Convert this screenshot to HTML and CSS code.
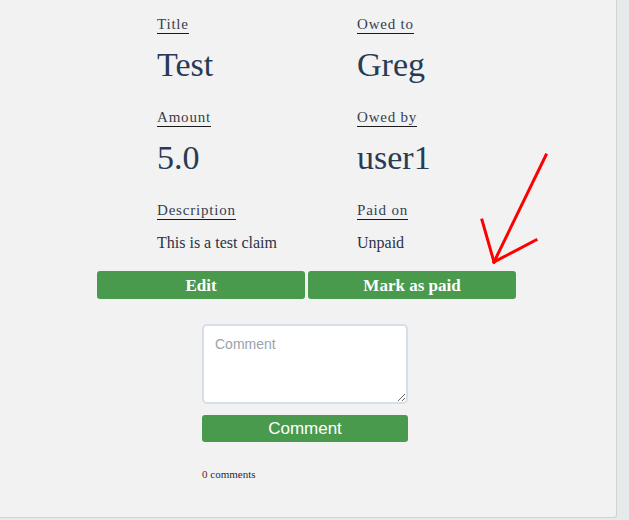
FILE: index.html
```html
<!DOCTYPE html>
<html>
<head>
<meta charset="utf-8">
<link rel="stylesheet" href="styles.css">
</head>
<body>
<div class="card">
  <div class="details">
    <div class="field"><span class="label">Title</span><div class="value">Test</div></div>
    <div class="field"><span class="label">Owed to</span><div class="value">Greg</div></div>
    <div class="field"><span class="label">Amount</span><div class="value">5.0</div></div>
    <div class="field"><span class="label">Owed by</span><div class="value">user1</div></div>
    <div class="field"><span class="label">Description</span><div class="text">This is a test claim</div></div>
    <div class="field"><span class="label">Paid on</span><div class="text">Unpaid</div></div>
  </div>
  <div class="actions">
    <button class="btn">Edit</button>
    <button class="btn">Mark as paid</button>
  </div>
  <div class="comments">
    <textarea class="comment-box" placeholder="Comment"></textarea>
    <button class="comment-btn">Comment</button>
    <div class="count"><span class="num">0</span> comments</div>
  </div>
  <svg class="arrow" width="629" height="520" viewBox="0 0 629 520">
    <g stroke="#ff0000" stroke-width="3" stroke-linecap="square" fill="none">
      <line x1="546" y1="155" x2="494" y2="262"/>
      <line x1="482" y1="220" x2="494" y2="262"/>
      <line x1="536" y1="240" x2="494" y2="262"/>
    </g>
  </svg>
</div>
</body>
</html>
```
FILE: styles.css
```css
html, body {
  margin: 0;
  padding: 0;
  background: #e6eaea;
}
.card {
  position: relative;
  width: 616px;
  height: 517px;
  background: #f2f2f2;
  border-right: 1px solid #d2d2d2;
  border-bottom: 1px solid #d2d2d2;
  border-bottom-right-radius: 3px;
  font-family: "Liberation Serif", "DejaVu Serif", serif;
  color: #2a3950;
  overflow: hidden;
}
.details {
  display: grid;
  grid-template-columns: 200px 200px;
  grid-auto-rows: 93px;
  margin-left: 157px;
  padding-top: 16px;
}
.field {
  display: flex;
  flex-direction: column;
  align-items: flex-start;
}
.label {
  font-size: 15px;
  line-height: 16px;
  letter-spacing: 0.8px;
  color: #36404f;
  padding-bottom: 1px;
  border-bottom: 1px solid #1b1b1b;
}
.value {
  font-size: 34px;
  line-height: 40px;
  margin-top: 11px;
  color: #283a54;
}
.text {
  font-size: 16px;
  line-height: 20px;
  margin-top: 13px;
  color: #2a3344;
}
.actions {
  display: flex;
  gap: 3px;
  margin-left: 97px;
  margin-top: -24px;
}
.btn {
  width: 208px;
  height: 28px;
  padding: 1px 0 0;
  border: none;
  border-radius: 3px;
  background: #4a9a4d;
  color: #ffffff;
  font-family: "Liberation Serif", "DejaVu Serif", serif;
  font-weight: bold;
  font-size: 17px;
  line-height: 27px;
}
.comments {
  margin-left: 202px;
  margin-top: 25px;
  display: flex;
  flex-direction: column;
  align-items: flex-start;
}
.comment-box {
  box-sizing: border-box;
  width: 206px;
  height: 80px;
  margin: 0;
  padding: 10px 11px;
  border: 2px solid #d6dee8;
  border-radius: 5px;
  background: #ffffff;
  font-family: "Liberation Sans", Arial, sans-serif;
  font-size: 14px;
  line-height: 16px;
  resize: both;
}
.comment-box::placeholder {
  color: #9aa3ad;
}
.comment-btn {
  width: 206px;
  height: 27px;
  margin-top: 11px;
  padding: 0;
  border: none;
  border-radius: 3px;
  background: #4a9a4d;
  color: #ffffff;
  font-family: "Liberation Sans", Arial, sans-serif;
  font-size: 17px;
  line-height: 27px;
}
.count {
  margin-top: 25px;
  font-size: 11px;
  line-height: 14px;
  color: #1e2a3a;
}
.num {
  color: #5a1e1e;
}
.arrow {
  position: absolute;
  left: 0;
  top: 0;
  pointer-events: none;
}
```
